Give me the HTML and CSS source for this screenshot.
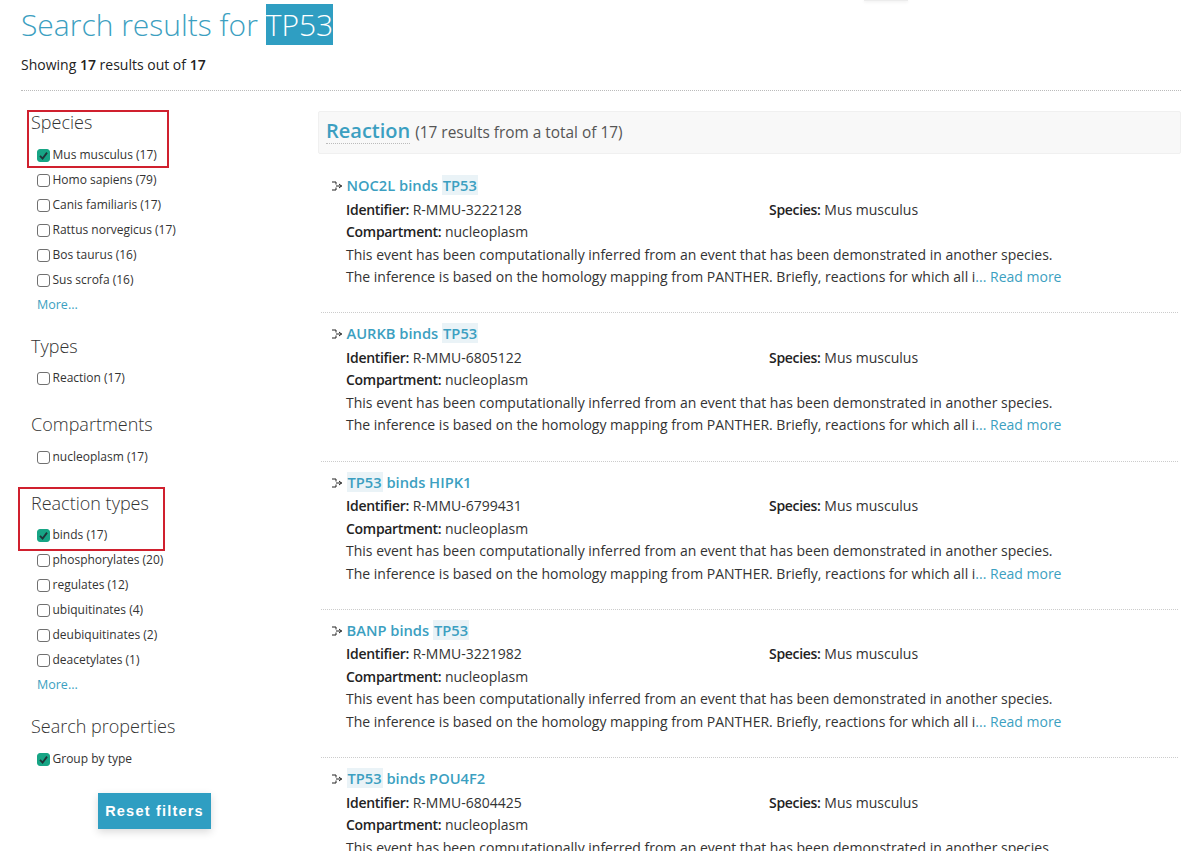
FILE: index.html
```html
<!DOCTYPE html>
<html lang="en">
<head>
<meta charset="utf-8">
<title>Search results for TP53</title>
<link rel="stylesheet" href="styles.css">
</head>
<body>
<div class="page">
  <span class="top-strip"></span>
  <header class="head">
    <h1 class="title">Search results for <span class="term">TP53</span></h1>
    <p class="count">Showing <b>17</b> results out of <b>17</b></p>
  </header>
  <div class="columns">
    <aside class="side">
      <section class="facet">
        <span class="mark mark-species"></span>
        <h3 class="facet-title">Species</h3>
        <label class="opt"><span class="box on"><svg viewBox="0 0 13 13"><path d="M3 6.8l2.600 2.700L10 3.600" /></svg></span>Mus musculus (17)</label>
        <label class="opt"><span class="box"></span>Homo sapiens (79)</label>
        <label class="opt"><span class="box"></span>Canis familiaris (17)</label>
        <label class="opt"><span class="box"></span>Rattus norvegicus (17)</label>
        <label class="opt"><span class="box"></span>Bos taurus (16)</label>
        <label class="opt"><span class="box"></span>Sus scrofa (16)</label>
        <a class="more">More...</a>
      </section>
      <section class="facet">
        <h3 class="facet-title">Types</h3>
        <label class="opt"><span class="box"></span>Reaction (17)</label>
      </section>
      <section class="facet">
        <h3 class="facet-title">Compartments</h3>
        <label class="opt"><span class="box"></span>nucleoplasm (17)</label>
      </section>
      <section class="facet">
        <span class="mark mark-types"></span>
        <h3 class="facet-title">Reaction types</h3>
        <label class="opt"><span class="box on"><svg viewBox="0 0 13 13"><path d="M3 6.8l2.600 2.700L10 3.600" /></svg></span>binds (17)</label>
        <label class="opt"><span class="box"></span>phosphorylates (20)</label>
        <label class="opt"><span class="box"></span>regulates (12)</label>
        <label class="opt"><span class="box"></span>ubiquitinates (4)</label>
        <label class="opt"><span class="box"></span>deubiquitinates (2)</label>
        <label class="opt"><span class="box"></span>deacetylates (1)</label>
        <a class="more">More...</a>
      </section>
      <section class="facet">
        <h3 class="facet-title">Search properties</h3>
        <label class="opt"><span class="box on"><svg viewBox="0 0 13 13"><path d="M3 6.8l2.600 2.700L10 3.600" /></svg></span>Group by type</label>
      </section>
      <button class="reset">Reset filters</button>
    </aside>
    <main class="results">
      <div class="group-head"><a class="group-name">Reaction</a> <span class="group-note">(17 results from a total of 17)</span></div>

      <article class="result">
        <h4 class="result-title"><svg class="ico" viewBox="0 0 12 10"><path d="M1 1h4v2.500M1 9h4V6.500M5 5h6M8 3l2.500 2L8 7" /></svg><a>NOC2L binds <span class="hit">TP53</span></a></h4>
        <div class="meta"><div class="meta-id"><b>Identifier:</b> R-MMU-3222128</div><div><b>Species:</b> Mus musculus</div></div>
        <div><b>Compartment:</b> nucleoplasm</div>
        <p class="sum">This event has been computationally inferred from an event that has been demonstrated in another species.<br>The inference is based on the homology mapping from PANTHER. Briefly, reactions for which all i<a>... Read more</a></p>
      </article>
      <article class="result">
        <h4 class="result-title"><svg class="ico" viewBox="0 0 12 10"><path d="M1 1h4v2.500M1 9h4V6.500M5 5h6M8 3l2.500 2L8 7" /></svg><a>AURKB binds <span class="hit">TP53</span></a></h4>
        <div class="meta"><div class="meta-id"><b>Identifier:</b> R-MMU-6805122</div><div><b>Species:</b> Mus musculus</div></div>
        <div><b>Compartment:</b> nucleoplasm</div>
        <p class="sum">This event has been computationally inferred from an event that has been demonstrated in another species.<br>The inference is based on the homology mapping from PANTHER. Briefly, reactions for which all i<a>... Read more</a></p>
      </article>
      <article class="result">
        <h4 class="result-title"><svg class="ico" viewBox="0 0 12 10"><path d="M1 1h4v2.500M1 9h4V6.500M5 5h6M8 3l2.500 2L8 7" /></svg><a><span class="hit">TP53</span> binds HIPK1</a></h4>
        <div class="meta"><div class="meta-id"><b>Identifier:</b> R-MMU-6799431</div><div><b>Species:</b> Mus musculus</div></div>
        <div><b>Compartment:</b> nucleoplasm</div>
        <p class="sum">This event has been computationally inferred from an event that has been demonstrated in another species.<br>The inference is based on the homology mapping from PANTHER. Briefly, reactions for which all i<a>... Read more</a></p>
      </article>
      <article class="result">
        <h4 class="result-title"><svg class="ico" viewBox="0 0 12 10"><path d="M1 1h4v2.500M1 9h4V6.500M5 5h6M8 3l2.500 2L8 7" /></svg><a>BANP binds <span class="hit">TP53</span></a></h4>
        <div class="meta"><div class="meta-id"><b>Identifier:</b> R-MMU-3221982</div><div><b>Species:</b> Mus musculus</div></div>
        <div><b>Compartment:</b> nucleoplasm</div>
        <p class="sum">This event has been computationally inferred from an event that has been demonstrated in another species.<br>The inference is based on the homology mapping from PANTHER. Briefly, reactions for which all i<a>... Read more</a></p>
      </article>
      <article class="result">
        <h4 class="result-title"><svg class="ico" viewBox="0 0 12 10"><path d="M1 1h4v2.500M1 9h4V6.500M5 5h6M8 3l2.500 2L8 7" /></svg><a><span class="hit">TP53</span> binds POU4F2</a></h4>
        <div class="meta"><div class="meta-id"><b>Identifier:</b> R-MMU-6804425</div><div><b>Species:</b> Mus musculus</div></div>
        <div><b>Compartment:</b> nucleoplasm</div>
        <p class="sum">This event has been computationally inferred from an event that has been demonstrated in another species.<br>The inference is based on the homology mapping from PANTHER. Briefly, reactions for which all i<a>... Read more</a></p>
      </article>
    </main>
  </div>
</div>
</body>
</html>
```
FILE: styles.css
```css
* { box-sizing: border-box; }
html, body { margin: 0; padding: 0; height: 851px; overflow: hidden; background: #fff; }
body { font-family: "Open Sans", sans-serif; font-size: 14px; line-height: 22.5px; color: #333; }
.page { padding: 4px 20px 0 21px; }
.top-strip { position: absolute; left: 864px; top: 0; width: 44px; height: 1px; background: #ececec; box-shadow: 0 1px 3px rgba(0,0,0,.12); }
.head { border-bottom: 1px dotted #bbb; height: 87px; }
.title { margin: 0; font-size: 30px; line-height: 41px; font-weight: 300; color: #3c9fc1; }
.term { background: #2f9ec2; color: #fff; display: inline-block; }
.count { margin: 9px 0 0; font-size: 14px; line-height: 22px; color: #222; }
.count b { font-weight: 600; color: #222; }
.columns { display: flex; }
.side { width: 297px; flex: none; padding: 19px 0 0 10px; }
.facet { position: relative; margin-bottom: 21px; }
.facet-title { margin: 0 0 7.5px; font-size: 18px; line-height: 25px; font-weight: 300; color: #333; }
.opt { display: flex; align-items: center; height: 25px; font-size: 12px; color: #333; padding-left: 6px; }
.box { width: 13px; height: 13px; margin-right: 2.500px; border: 1px solid #707070; border-radius: 3px; background: #fff; flex: none; display: block; }
.box.on { background: #17a585; border-color: #17a585; }
.box svg { display: block; width: 13px; height: 13px; margin: -1px; fill: none; stroke: #1f3438; stroke-width: 1.800; }
.more { display: block; padding-left: 6px; height: 25px; line-height: 24px; font-size: 12.500px; color: #3c9fc1; margin-bottom: -5px; }
.mark { position: absolute; border: 2px solid #d0202e; pointer-events: none; }
.mark-species { left: -4px; top: 0; width: 142px; height: 58px; }
.mark-types { left: -13px; top: -4px; width: 147px; height: 64px; }
.reset { display: block; margin: 13px 0 0 67px; width: 113px; height: 36px; border: 0; background: #2f9ec2; color: #fff; font-family: "Liberation Sans", sans-serif; font-size: 14.500px; font-weight: 700; letter-spacing: 1.200px; box-shadow: 0 3px 8px rgba(0,0,0,.15); padding: 0; }
.results { flex: 1; padding-top: 20px; min-width: 0; }
.group-head { height: 43px; background: #f8f8f8; border: 1px solid #f0f0f0; border-radius: 2px; padding: 7px 7px 0; margin-bottom: 11px; display: flex; align-items: baseline; gap: 5px; }
.group-name { font-size: 20px; line-height: 24px; font-weight: 600; color: #3c9fc1; border-bottom: 1px dotted #bbb; }
.group-note { font-size: 15.400px; color: #555; }
.result { padding: 8px 0 0 25px; height: 148.300px; border-bottom: 1px dotted #ccc; color: #333; margin: 0 3px; position: relative; }
.result-title { margin: 0; font-size: 14.700px; line-height: 25.500px; font-weight: 600; color: #3c9fc1; }
.result-title a { margin-left: 0.500px; }
.ico { position: absolute; left: 10px; top: 16px; width: 12px; height: 10px; fill: none; stroke: #222; stroke-width: 1; }
.hit { background: #eaf3f7; padding: 0 1px; }
.meta { display: flex; }
.meta-id { width: 423px; }
.meta b, .result > div > b { font-weight: 600; color: #222; letter-spacing: -0.300px; }
.sum { margin: 0; }
.sum a { color: #3c9fc1; }
```
